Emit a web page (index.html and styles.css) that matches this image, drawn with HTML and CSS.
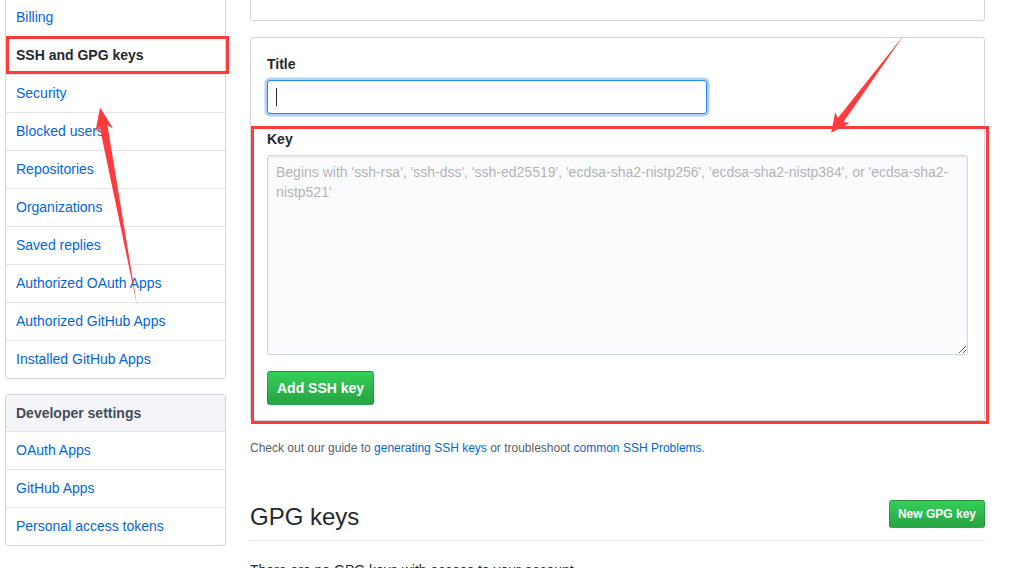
FILE: index.html
```html
<!DOCTYPE html>
<html lang="en">
<head>
<meta charset="utf-8">
<title>SSH and GPG keys</title>
<link rel="stylesheet" href="styles.css">
</head>
<body>
<div class="page">
  <aside class="sidebar">
    <nav class="menu">
      <a class="menu-item" href="#">Billing</a>
      <a class="menu-item selected" href="#">SSH and GPG keys</a>
      <a class="menu-item" href="#">Security</a>
      <a class="menu-item" href="#">Blocked users</a>
      <a class="menu-item" href="#">Repositories</a>
      <a class="menu-item" href="#">Organizations</a>
      <a class="menu-item" href="#">Saved replies</a>
      <a class="menu-item" href="#">Authorized OAuth Apps</a>
      <a class="menu-item" href="#">Authorized GitHub Apps</a>
      <a class="menu-item" href="#">Installed GitHub Apps</a>
    </nav>
    <nav class="menu">
      <h3 class="menu-heading">Developer settings</h3>
      <a class="menu-item" href="#">OAuth Apps</a>
      <a class="menu-item" href="#">GitHub Apps</a>
      <a class="menu-item" href="#">Personal access tokens</a>
    </nav>
  </aside>

  <main class="main">
    <div class="box box-top"></div>

    <form class="box form-box">
      <div class="form-group">
        <label class="label" for="title">Title</label>
        <div class="input-wrap">
          <input id="title" class="form-control focused" type="text">
        </div>
      </div>
      <div class="form-group">
        <label class="label" for="key">Key</label>
        <textarea id="key" class="form-control textarea" placeholder="Begins with 'ssh-rsa', 'ssh-dss', 'ssh-ed25519', 'ecdsa-sha2-nistp256', 'ecdsa-sha2-nistp384', or 'ecdsa-sha2-nistp521'"></textarea>
      </div>
      <div class="actions">
        <button type="button" class="btn btn-primary">Add SSH key</button>
      </div>
    </form>

    <p class="note">Check out our guide to <a href="#">generating SSH keys</a> or troubleshoot <a href="#">common SSH Problems</a>.</p>

    <div class="subhead">
      <h2 class="subhead-heading">GPG keys</h2>
      <button type="button" class="btn btn-primary btn-sm">New GPG key</button>
    </div>
    <p class="empty">There are no GPG keys with access to your account.</p>
  </main>
</div>

<div class="annotations">
  <div class="mark mark-nav"></div>
  <div class="mark mark-key"></div>
  <svg class="arrows" width="1016" height="568" viewBox="0 0 1016 568">
    <g transform="translate(137 305) rotate(-100.6)">
      <polygon points="0,0 182,-4 178,-9 201,0 178,9 182,4" fill="#ff3b3b"/>
    </g>
    <g transform="translate(904 35) rotate(126.7)">
      <polygon points="0,0 106,-3.5 103,-9 122,0 103,9 106,3.5" fill="#ff3b3b"/>
    </g>
  </svg>
</div>
</body>
</html>
```

FILE: styles.css
```css
html, body {
  overflow: hidden;
}

body {
  margin: 0;
  font-family: "Liberation Sans", Arial, sans-serif;
  font-size: 14px;
  line-height: 1.5;
  color: #24292e;
  background: #fff;
}

a {
  color: #0366d6;
  text-decoration: none;
}

.page {
  display: flex;
  gap: 24px;
  padding: 0 31px 0 5px;
  margin-top: -2px;
}

/* Sidebar */
.sidebar {
  width: 221px;
  flex: none;
}

.menu {
  display: flex;
  flex-direction: column;
  border: 1px solid #d1d5da;
  border-radius: 3px;
  margin-bottom: 15px;
  overflow: hidden;
}

.menu-item {
  position: relative;
  display: block;
  padding: 8px 10px;
  border-bottom: 1px solid #e1e4e8;
  color: #0366d6;
}

.menu-item:last-child {
  border-bottom: 0;
}

.menu-item.selected {
  color: #24292e;
  font-weight: bold;
}

.menu-item.selected::before {
  content: "";
  position: absolute;
  top: 0;
  bottom: 0;
  left: 0;
  width: 2px;
  background: #e36209;
}

.menu-heading {
  margin: 0;
  padding: 8px 10px;
  font-size: 14px;
  font-weight: bold;
  line-height: 20px;
  color: #444d56;
  background: #f3f5f8;
  border-bottom: 1px solid #e1e4e8;
}

/* Main */
.main {
  width: 735px;
  flex: none;
}

.box {
  border: 1px solid #d1d5da;
  border-radius: 3px;
  background: #fff;
}

.box-top {
  height: 23px;
  box-sizing: border-box;
  margin-bottom: 16px;
}

.form-box {
  display: flex;
  flex-direction: column;
  gap: 16px;
  padding: 16px 16px 15px;
}

.form-group {
  display: flex;
  flex-direction: column;
  align-items: flex-start;
  gap: 6px;
}

.form-group + .form-group {
  margin-top: -1px;
}

.label {
  font-weight: bold;
  line-height: 20px;
}

.input-wrap {
  position: relative;
}

.input-wrap::after {
  content: "";
  position: absolute;
  left: 9px;
  top: 8px;
  width: 1px;
  height: 18px;
  background: #24292e;
}

.form-control {
  box-sizing: border-box;
  font-family: inherit;
  font-size: 14px;
  line-height: 20px;
  padding: 6px 8px;
  color: #24292e;
  background: #fafbfc;
  border: 1px solid #d1d5da;
  border-radius: 3px;
  box-shadow: inset 0 1px 2px rgba(27, 31, 35, 0.075);
  outline: none;
}

.focused {
  width: 440px;
  height: 34px;
  background: #fff;
  border-color: #2188ff;
  box-shadow: inset 0 1px 2px rgba(27, 31, 35, 0.075), 0 0 0 2.5px rgba(3, 102, 214, 0.3);
}

.textarea {
  width: 100%;
  height: 200px;
  display: block;
  resize: vertical;
}

.textarea::placeholder {
  color: #b1b5ba;
  opacity: 1;
}

.btn {
  font-family: inherit;
  font-size: 14px;
  font-weight: bold;
  line-height: 20px;
  padding: 6px 9px;
  border: 1px solid rgba(27, 31, 35, 0.2);
  border-radius: 3px;
  cursor: pointer;
}

.btn-primary {
  color: #fff;
  background-color: #28a745;
  background-image: linear-gradient(-180deg, #34d058 0%, #28a745 90%);
}

.btn-sm {
  font-size: 12px;
  padding: 3px 8px;
  margin-top: 1px;
}

.note {
  margin: 18px 0 0;
  font-size: 12px;
  line-height: 18px;
  color: #586069;
}

.subhead {
  display: flex;
  align-items: flex-start;
  margin-top: 42px;
  padding-bottom: 5px;
  border-bottom: 1px solid #e1e4e8;
  margin-bottom: 19px;
}

.subhead-heading {
  flex: 1 1 auto;
  margin: 0;
  font-size: 24px;
  font-weight: normal;
  line-height: 36px;
}

.empty {
  margin: 0;
}

/* Annotations drawn over the screenshot */
.annotations {
  position: fixed;
  inset: 0;
  pointer-events: none;
}

.mark {
  position: absolute;
  box-sizing: border-box;
  border: 3px solid #ff3b3b;
}

.mark-nav {
  left: 6px;
  top: 36px;
  width: 223px;
  height: 38px;
}

.mark-key {
  left: 251px;
  top: 126px;
  width: 738px;
  height: 298px;
}

.arrows {
  position: absolute;
  left: 0;
  top: 0;
}
```
